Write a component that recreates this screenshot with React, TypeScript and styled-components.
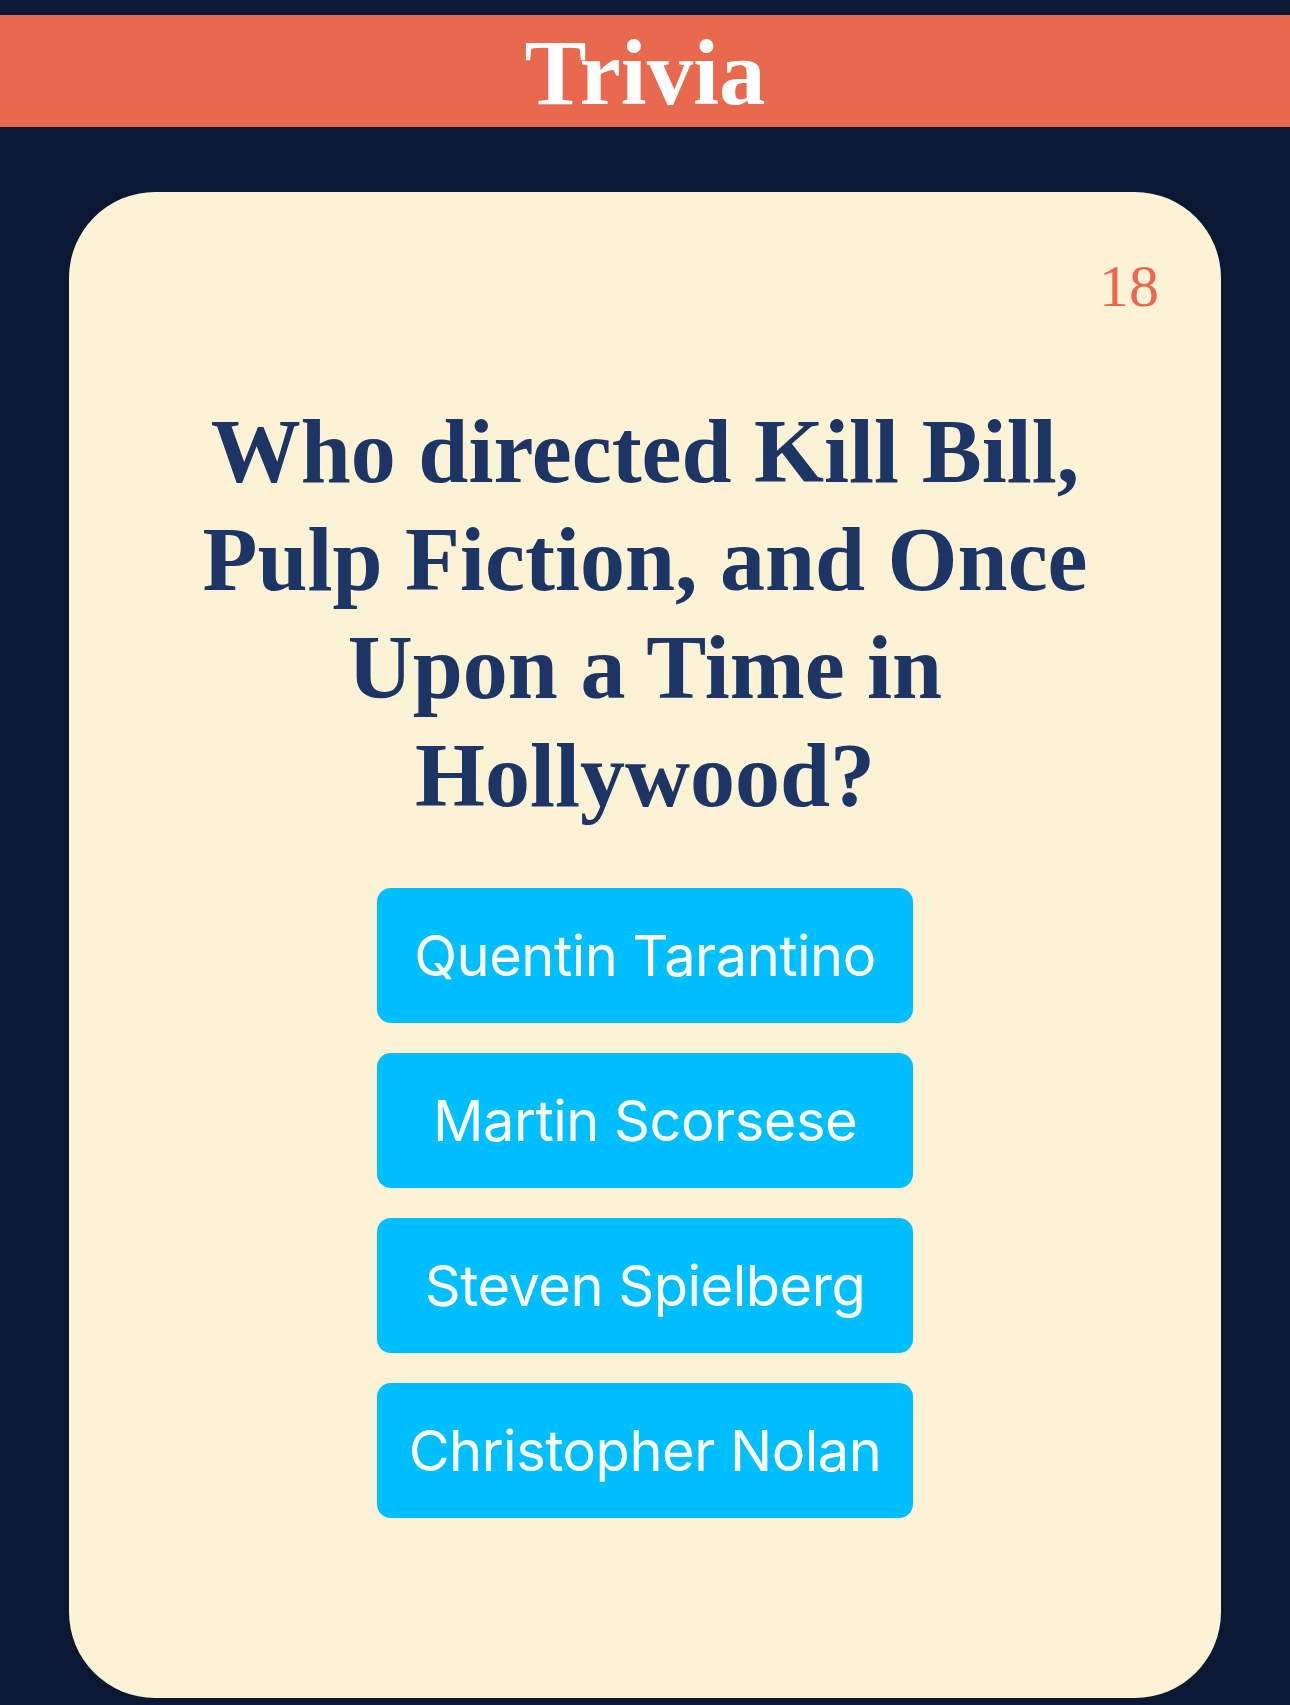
import React from "react";
import styled, { createGlobalStyle } from "styled-components";

const GlobalStyle = createGlobalStyle`
  html, body {
    margin: 0;
    padding: 0;
    background: #0b1833;
  }
  body {
    font-family: "Liberation Serif", "Times New Roman", serif;
  }
`;

const Page = styled.div`
  display: flex;
  flex-direction: column;
  padding-top: 15px;
  padding-bottom: 5px;
`;

const Header = styled.header`
  height: 112px;
  background: #e8694e;
  display: flex;
  align-items: center;
  justify-content: center;
  padding-top: 2px;
  box-sizing: border-box;
`;

const Title = styled.h1`
  margin: 0;
  font-family: "Liberation Serif", "Times New Roman", serif;
  font-weight: 700;
  font-size: 93px;
  line-height: normal;
  color: #ffffff;
`;

const Card = styled.main`
  margin: 65px 69px 0;
  background: #fcf3d7;
  border-radius: 86px;
  padding: 60px 62px 180px;
  display: flex;
  flex-direction: column;
  align-items: center;
`;

const Counter = styled.div`
  align-self: flex-end;
  font-family: "Liberation Serif", "Times New Roman", serif;
  font-size: 60px;
  line-height: normal;
  color: #e8694e;
`;

const Question = styled.h2`
  margin: 77px 0 0;
  font-family: "Liberation Serif", "Times New Roman", serif;
  font-weight: 700;
  font-size: 90px;
  line-height: 108px;
  color: #1c3564;
  text-align: center;
  max-width: 1000px;
`;

const Answers = styled.div`
  margin-top: 58px;
  display: flex;
  flex-direction: column;
  gap: 30px;
`;

const AnswerButton = styled.button`
  width: 536px;
  height: 135px;
  border: none;
  border-radius: 14px;
  background: #00bfff;
  color: #ffffff;
  font-family: Inter, "Noto Sans", sans-serif;
  font-size: 56px;
  font-weight: 400;
  letter-spacing: -0.5px;
  display: flex;
  align-items: center;
  justify-content: center;
  padding: 0;
  cursor: pointer;
`;

const answers = [
  "Quentin Tarantino",
  "Martin Scorsese",
  "Steven Spielberg",
  "Christopher Nolan",
];

export default function App() {
  return (
    <>
      <GlobalStyle />
      <Page>
        <Header>
          <Title>Trivia</Title>
        </Header>
        <Card>
          <Counter>18</Counter>
          <Question>
            Who directed Kill Bill, Pulp Fiction, and Once Upon a Time in
            Hollywood?
          </Question>
          <Answers>
            {answers.map((a) => (
              <AnswerButton key={a}>{a}</AnswerButton>
            ))}
          </Answers>
        </Card>
      </Page>
    </>
  );
}
